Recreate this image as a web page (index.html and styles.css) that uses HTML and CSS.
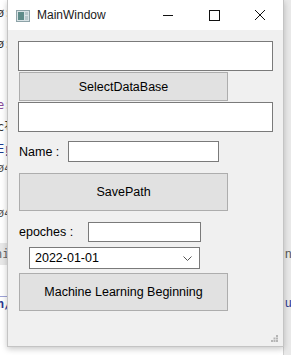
FILE: index.html
```html
<!DOCTYPE html>
<html lang="en">
  <head>
    <meta charset="UTF-8" />
    <title>MainWindow</title>
    <link rel="stylesheet" href="styles.css">
  </head>
  <body>
    <div class="backdrop">
      <span class="frag frag-1">ø:</span>
      <span class="frag frag-2">ø:</span>
      <span class="frag frag-3">e:</span>
      <span class="frag frag-4">cł</span>
      <span class="frag frag-5">Eŗ</span>
      <span class="frag frag-6">ø4</span>
      <span class="frag frag-7">ø4</span>
      <span class="frag frag-8">ni</span>
      <span class="frag frag-9">n/</span>
      <div class="side-pane">
        <span class="side-text">n</span>
        <span class="side-link">u</span>
      </div>
    </div>

    <div class="window">
      <div class="titlebar">
        <svg class="app-icon" width="14" height="12" viewBox="0 0 14 12">
          <rect x="0.5" y="0.5" width="13" height="11" fill="#d9e3e6" stroke="#8ea3a8" />
          <rect x="2" y="2" width="6" height="8" fill="#5f8c8a" />
          <rect x="9" y="2" width="3" height="3" fill="#b8c8cc" />
          <rect x="9" y="6" width="3" height="4" fill="#b8c8cc" />
        </svg>
        <span class="title">MainWindow</span>
        <div class="caption-btns">
          <svg width="46" height="30" viewBox="0 0 46 30">
            <line x1="18" y1="15.5" x2="28" y2="15.5" stroke="#111" stroke-width="1" />
          </svg>
          <svg width="46" height="30" viewBox="0 0 46 30">
            <rect x="18.5" y="10.5" width="10" height="10" fill="none" stroke="#111" stroke-width="1" />
          </svg>
          <svg width="46" height="30" viewBox="0 0 46 30">
            <path d="M18 10 L28 20 M28 10 L18 20" stroke="#111" stroke-width="1" />
          </svg>
        </div>
      </div>

      <div class="content">
        <div class="field field-wide"></div>
        <button class="btn btn-short">SelectDataBase</button>
        <div class="field field-wide"></div>

        <div class="row row-name">
          <span class="label">Name :</span>
          <div class="field field-name"></div>
        </div>

        <button class="btn btn-tall">SavePath</button>

        <div class="row row-epoch">
          <span class="label">epoches :</span>
          <div class="field field-epoch"></div>
        </div>

        <div class="combo">
          <span>2022-01-01</span>
          <svg width="9" height="5" viewBox="0 0 9 5">
            <path d="M0.5 0.5 L4.5 4.5 L8.5 0.5" fill="none" stroke="#555" stroke-width="1" />
          </svg>
        </div>

        <button class="btn btn-tall btn-last">Machine Learning Beginning</button>
      </div>

      <svg class="grip" width="7" height="7" viewBox="0 0 7 7">
        <rect x="5" y="0" width="2" height="2" fill="#b5b5b5" />
        <rect x="2.5" y="2.5" width="2" height="2" fill="#b5b5b5" />
        <rect x="5" y="2.5" width="2" height="2" fill="#b5b5b5" />
        <rect x="0" y="5" width="2" height="2" fill="#b5b5b5" />
        <rect x="2.5" y="5" width="2" height="2" fill="#b5b5b5" />
        <rect x="5" y="5" width="2" height="2" fill="#b5b5b5" />
      </svg>
    </div>
  </body>
</html>
```

FILE: styles.css
```css
body {
  margin: 0;
  width: 291px;
  height: 355px;
  position: relative;
  overflow: hidden;
  background-color: #ffffff;
  font-family: "Liberation Sans", Arial, sans-serif;
  font-size: 12px;
  color: #000000;
}

.backdrop {
  position: absolute;
  top: 0;
  left: 0;
  width: 100%;
  height: 100%;
  z-index: 0;
}

.frag {
  position: absolute;
  left: -3px;
  font-family: "DejaVu Sans Mono", monospace;
  font-size: 12px;
  color: #333333;
}

.frag-1 { top: 6px; }
.frag-2 { top: 37px; }
.frag-3 { top: 98px; color: #8a4c9a; }
.frag-4 { top: 120px; }
.frag-5 { top: 142px; color: #1c3b8f; }
.frag-6 { top: 161px; color: #555555; }
.frag-7 { top: 206px; color: #555555; }

.frag-8 {
  top: 243px;
  left: 0;
  width: 8px;
  height: 22px;
  line-height: 22px;
  background-color: #e8e8e8;
  overflow: hidden;
  color: #666666;
  text-indent: -5px;
}

.frag-9 {
  top: 296px;
  color: #2a3590;
  font-weight: bold;
  border-top: 1px solid #9ea3d8;
}

.side-pane {
  position: absolute;
  top: 0;
  right: 0;
  width: 7px;
  height: 100%;
  background-color: #e9e9e9;
  border-left: 1px solid #d0d0d0;
}

.side-text {
  position: absolute;
  top: 247px;
  left: 1px;
  color: #555555;
}

.side-link {
  position: absolute;
  top: 296px;
  left: 1px;
  color: #2a3590;
}

.window {
  position: relative;
  z-index: 1;
  margin-left: 7px;
  width: 275px;
  height: 346px;
  background-color: #f0f0f0;
  border: 1px solid #c4c4c4;
  border-top: none;
  box-shadow: 0 2px 6px rgba(0, 0, 0, 0.22);
}

.titlebar {
  height: 30px;
  background-color: #ffffff;
  display: flex;
  align-items: center;
}

.app-icon {
  margin-left: 8px;
  margin-top: 1px;
}

.title {
  margin-left: 7px;
  font-size: 12px;
  color: #1a1a1a;
}

.caption-btns {
  margin-left: auto;
  display: flex;
}

.content {
  padding-left: 10px;
  display: flex;
  flex-direction: column;
  align-items: flex-start;
}

.field {
  background-color: #ffffff;
  border: 1px solid #7a7a7a;
  box-sizing: border-box;
}

.field-wide {
  width: 255px;
  height: 30px;
  margin-top: 11px;
}

.btn {
  font-family: "Liberation Sans", Arial, sans-serif;
  font-size: 12.5px;
  color: #000000;
  background-color: #e1e1e1;
  border: 1px solid #adadad;
  box-sizing: border-box;
  width: 209px;
  margin-left: 1px;
  padding: 0;
}

.btn-short {
  height: 29px;
  margin-top: 1px;
  margin-bottom: -10px;
}

.btn-tall {
  height: 38px;
  margin-top: 11px;
}

.btn-last {
  margin-top: 4px;
}

.row {
  display: flex;
  align-items: center;
  margin-top: 9px;
  margin-left: 1px;
  height: 21px;
}

.row-epoch {
  margin-top: 10px;
}

.label {
  font-size: 12.5px;
}

.field-name {
  width: 151px;
  height: 21px;
  margin-left: 9px;
}

.field-epoch {
  width: 113px;
  height: 20px;
  margin-left: 15px;
}

.combo {
  margin-top: 5px;
  margin-left: 11px;
  width: 171px;
  height: 22px;
  box-sizing: border-box;
  background-color: #ffffff;
  border: 1px solid #7a7a7a;
  display: flex;
  align-items: center;
  justify-content: space-between;
  padding: 0 7px 0 5px;
  font-size: 12.5px;
}

.grip {
  position: absolute;
  right: 5px;
  bottom: 4px;
}
```
